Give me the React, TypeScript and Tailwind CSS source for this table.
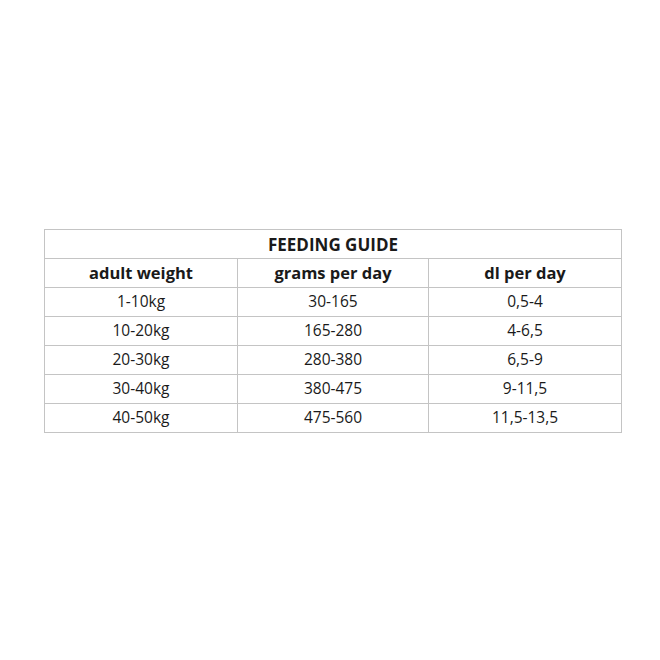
const rows = [
  ['1-10kg', '30-165', '0,5-4'],
  ['10-20kg', '165-280', '4-6,5'],
  ['20-30kg', '280-380', '6,5-9'],
  ['30-40kg', '380-475', '9-11,5'],
  ['40-50kg', '475-560', '11,5-13,5'],
]

export default function App() {
  return (
    <div
      className="w-[660px] h-[660px] bg-white pt-[229px] pl-[44px] text-[#1a1a1a]"
      style={{ fontFamily: '"Open Sans", "Liberation Sans", sans-serif' }}
    >
      <table className="w-[577px] border-collapse table-fixed">
        <colgroup>
          <col className="w-[193px]" />
          <col className="w-[191px]" />
          <col className="w-[193px]" />
        </colgroup>
        <thead>
          <tr className="h-[29px]">
            <th colSpan={3} className="border border-[#c4c4c4] text-[17px] font-bold p-0 leading-none">
              FEEDING GUIDE
            </th>
          </tr>
          <tr className="h-[29px]">
            <th className="border border-[#c4c4c4] text-[16.5px] font-bold p-0 leading-none">adult weight</th>
            <th className="border border-[#c4c4c4] text-[16.5px] font-bold p-0 leading-none">grams per day</th>
            <th className="border border-[#c4c4c4] text-[16.5px] font-bold p-0 leading-none">dl per day</th>
          </tr>
        </thead>
        <tbody>
          {rows.map((r) => (
            <tr key={r[0]} className="h-[29px]">
              {r.map((c, i) => (
                <td key={i} className="border border-[#c4c4c4] text-center text-[15.5px] p-0 leading-none">
                  {c}
                </td>
              ))}
            </tr>
          ))}
        </tbody>
      </table>
    </div>
  )
}
